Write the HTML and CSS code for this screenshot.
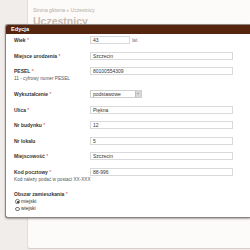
FILE: index.html
```html
<!DOCTYPE html>
<html lang="pl">
<head>
<meta charset="utf-8">
<link rel="stylesheet" href="styles.css">
</head>
<body>
<div class="page">
  <div class="strip"></div>
  <div class="panel">
    <div class="crumbs">Strona główna » Uczestnicy</div>
    <h1 class="title">Uczestnicy</h1>
  </div>
</div>
<div class="dialog">
  <div class="dialog-head">Edycja</div>
  <div class="dialog-body">
    <div class="row">
      <div class="lab"><span class="l">Wiek <i>*</i></span></div>
      <div class="ctl"><span class="inp short">43</span><span class="unit">lat</span></div>
    </div>
    <div class="row">
      <div class="lab"><span class="l">Miejsce urodzenia <i>*</i></span></div>
      <div class="ctl"><span class="inp">Szczecin</span></div>
    </div>
    <div class="row">
      <div class="lab"><span class="l">PESEL <i>*</i></span><span class="hint">11 - cyfrowy numer PESEL</span></div>
      <div class="ctl"><span class="inp">80100554309</span></div>
    </div>
    <div class="row">
      <div class="lab"><span class="l">Wykształcenie <i>*</i></span></div>
      <div class="ctl"><span class="sel"><span class="sel-text">podstawowe</span><span class="sel-btn"></span></span></div>
    </div>
    <div class="row">
      <div class="lab"><span class="l">Ulica <i>*</i></span></div>
      <div class="ctl"><span class="inp">Piękna</span></div>
    </div>
    <div class="row">
      <div class="lab"><span class="l">Nr budynku <i>*</i></span></div>
      <div class="ctl"><span class="inp">12</span></div>
    </div>
    <div class="row">
      <div class="lab"><span class="l">Nr lokalu</span></div>
      <div class="ctl"><span class="inp">5</span></div>
    </div>
    <div class="row">
      <div class="lab"><span class="l">Miejscowość <i>*</i></span></div>
      <div class="ctl"><span class="inp">Szczecin</span></div>
    </div>
    <div class="row">
      <div class="lab"><span class="l">Kod pocztowy <i>*</i></span><span class="hint">Kod należy podać w postaci XX-XXX</span></div>
      <div class="ctl"><span class="inp">88-996</span></div>
    </div>
    <div class="group">
      <div class="l">Obszar zamieszkania <i>*</i></div>
      <div class="radio"><span class="dot on"></span>miejski</div>
      <div class="radio"><span class="dot"></span>wiejski</div>
    </div>
  </div>
</div>
</body>
</html>
```

FILE: styles.css
```css
html, body {
  margin: 0;
  padding: 0;
}
body {
  width: 250px;
  height: 250px;
  overflow: hidden;
  background: #f1edea;
  font-family: "Liberation Sans", Arial, sans-serif;
  position: relative;
}
.page {
  display: flex;
  height: 249px;
}
.strip {
  width: 27px;
  flex: none;
}
.panel {
  flex: 1;
  background: #fcfbf9;
  border-left: 1px solid #e4ddd9;
  border-bottom: 1px solid #d9cdca;
  border-bottom-left-radius: 3px;
  padding: 7px 0 0 5px;
}
.crumbs {
  font-size: 5px;
  line-height: 6px;
  color: #b2aba7;
}
.title {
  margin: 2px 0 0;
  font-size: 10.5px;
  line-height: 12px;
  font-weight: bold;
  color: #c9bcb2;
}
.dialog {
  position: absolute;
  left: 5px;
  right: 0;
  top: 24px;
  height: 192px;
  background: #fff;
  border: 1px solid #8d8480;
  border-right: none;
  border-radius: 3px 0 0 3px;
  box-shadow: 0 1px 2px rgba(0, 0, 0, 0.35);
  overflow: hidden;
}
.dialog-head {
  height: 9px;
  background: #55250f;
  color: #fff;
  font-weight: bold;
  font-size: 5.6px;
  line-height: 9px;
  padding-left: 5px;
}
.dialog-body {
  padding: 2px 0 0 8px;
  display: flex;
  flex-direction: column;
  gap: 7.5px;
}
.row {
  display: flex;
  align-items: flex-start;
}
.lab {
  width: 76px;
  flex: none;
  display: flex;
  flex-direction: column;
}
.l {
  font-size: 5px;
  line-height: 8px;
  font-weight: bold;
  color: #333;
}
.l i {
  font-style: normal;
  color: #e0463a;
  font-weight: normal;
}
.hint {
  font-size: 4.7px;
  line-height: 7.5px;
  color: #555;
  white-space: nowrap;
}
.ctl {
  display: flex;
  align-items: center;
}
.inp {
  box-sizing: border-box;
  width: 143px;
  height: 8px;
  border: 1px solid #d9d9d9;
  background: #fff;
  font-size: 5px;
  line-height: 6px;
  padding-left: 2px;
  color: #333;
}
.inp.short {
  width: 40px;
}
.unit {
  font-size: 5px;
  color: #6a7383;
  margin-left: 2px;
}
.sel {
  box-sizing: border-box;
  width: 52px;
  height: 7.5px;
  border: 1px solid #cfcfcf;
  display: flex;
  align-items: center;
  background: #fff;
}
.sel-text {
  flex: 1;
  font-size: 5px;
  line-height: 6px;
  padding-left: 2px;
  color: #333;
}
.sel-btn {
  width: 5px;
  height: 5.5px;
  background: #d7d7d7;
  border-left: 1px solid #bdbdbd;
  position: relative;
}
.sel-btn::after {
  content: "";
  position: absolute;
  left: 1.2px;
  top: 2px;
  border-left: 1.3px solid transparent;
  border-right: 1.3px solid transparent;
  border-top: 1.6px solid #777;
}
.group {
  display: flex;
  flex-direction: column;
}
.group .l {
  line-height: 7px;
}
.radio {
  display: flex;
  align-items: center;
  font-size: 5px;
  line-height: 7.5px;
  color: #333;
}
.dot {
  box-sizing: border-box;
  width: 4.5px;
  height: 4.5px;
  border: 0.6px solid #777;
  border-radius: 50%;
  margin: 0 1.5px 0 1px;
  background: #fff;
  position: relative;
}
.dot.on::after {
  content: "";
  position: absolute;
  left: 0.8px;
  top: 0.8px;
  width: 1.8px;
  height: 1.8px;
  border-radius: 50%;
  background: #222;
}
```
